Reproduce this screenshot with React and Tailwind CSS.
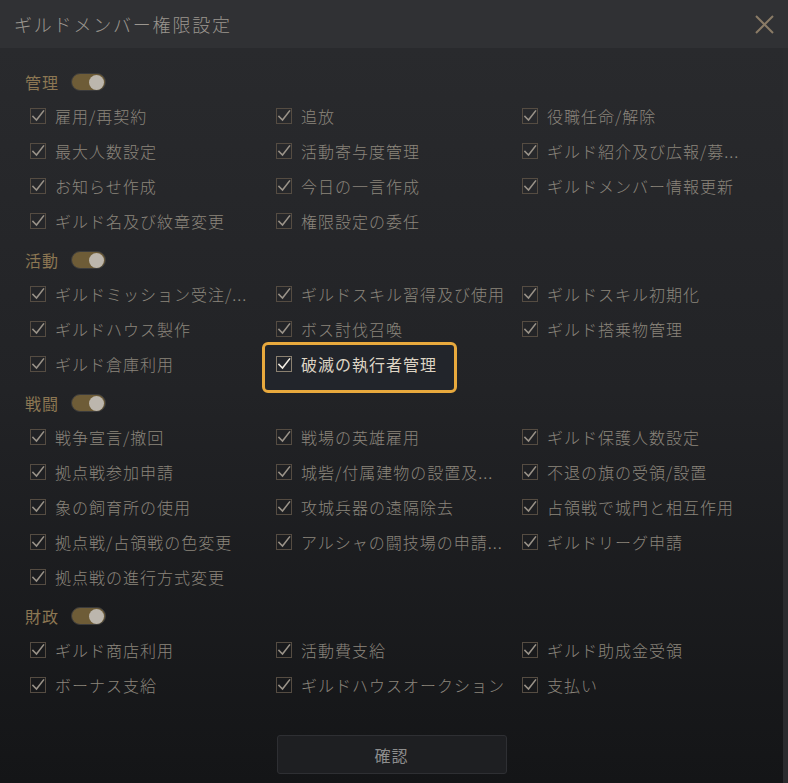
import React from 'react'

const sections = [
    {
        title: '管理',
        items: [
            '雇用/再契約', '追放', '役職任命/解除',
            '最大人数設定', '活動寄与度管理', 'ギルド紹介及び広報/募...',
            'お知らせ作成', '今日の一言作成', 'ギルドメンバー情報更新',
            'ギルド名及び紋章変更', '権限設定の委任',
        ],
    },
    {
        title: '活動',
        items: [
            'ギルドミッション受注/...', 'ギルドスキル習得及び使用', 'ギルドスキル初期化',
            'ギルドハウス製作', 'ボス討伐召喚', 'ギルド搭乗物管理',
            'ギルド倉庫利用', '破滅の執行者管理',
        ],
        highlight: '破滅の執行者管理',
    },
    {
        title: '戦闘',
        items: [
            '戦争宣言/撤回', '戦場の英雄雇用', 'ギルド保護人数設定',
            '拠点戦参加申請', '城砦/付属建物の設置及...', '不退の旗の受領/設置',
            '象の飼育所の使用', '攻城兵器の遠隔除去', '占領戦で城門と相互作用',
            '拠点戦/占領戦の色変更', 'アルシャの闘技場の申請...', 'ギルドリーグ申請',
            '拠点戦の進行方式変更',
        ],
    },
    {
        title: '財政',
        items: [
            'ギルド商店利用', '活動費支給', 'ギルド助成金受領',
            'ボーナス支給', 'ギルドハウスオークション', '支払い',
        ],
    },
]

const Check = ({ bright }) => (
    <span
        className={
            'w-[16px] h-[16px] border flex items-center justify-center shrink-0 ' +
            (bright ? 'border-[#8a8070]' : 'border-[#554c42]')
        }
    >
        <svg width="14" height="14" viewBox="0 0 14 14" fill="none">
            <path
                d="M2 7.5 L5.5 11 L12.5 2"
                stroke={bright ? '#f2ede4' : '#9a9389'}
                strokeWidth="1.6"
                strokeLinecap="square"
            />
        </svg>
    </span>
)

const Toggle = () => (
    <span className="w-[35px] h-[18px] rounded-full bg-[#6e5c37] border border-[#3b3b3c] flex items-center justify-end pr-[1px]">
        <span className="w-[15px] h-[15px] rounded-full bg-[#bcb6ad]" />
    </span>
)

const Item = ({ label, highlight }) => (
    <div className="relative h-[35px] flex items-center">
        {highlight && (
            <span className="absolute left-[-14px] top-[-4px] w-[195px] h-[51px] rounded-[6px] border-[3px] border-[#e8a93d] bg-[#22252b]" />
        )}
        <span className="relative flex items-center gap-[9px]">
            <Check bright={highlight} />
            <span
                className={
                    'text-[16px] tracking-[1px] whitespace-nowrap ' +
                    (highlight ? 'text-[#ddd4c4]' : 'font-light text-[#8b857c]')
                }
            >
                {label}
            </span>
        </span>
    </div>
)

export default function App() {
    return (
        <div
            className="w-[788px] h-[783px] flex flex-col bg-gradient-to-b from-[#2a2b2e] via-[#222326] to-[#141517]"
            style={{ fontFamily: '"Noto Sans CJK JP", "Noto Sans", sans-serif' }}
        >
            <div className="h-[48px] shrink-0 flex items-center justify-between pl-[14px] pr-[13px] bg-[#303134]">
                <span className="text-[18px] font-light tracking-[1.8px] text-[#9b968f]">ギルドメンバー権限設定</span>
                <svg width="22" height="22" viewBox="0 0 22 22" fill="none">
                    <path d="M3 3 L20 20 M20 3 L3 20" stroke="#8a7b66" strokeWidth="2" />
                </svg>
            </div>
            <div className="flex-1 flex flex-col border-r-[5px] border-[#2a2b2e]">
                <div className="flex flex-col gap-[6px] pt-[18px]">
                    {sections.map((s) => (
                        <div key={s.title}>
                            <div className="h-[32px] flex items-center gap-[12px] pl-[25px]">
                                <span className="text-[16px] tracking-[1px] text-[#8c7753]">{s.title}</span>
                                <Toggle />
                            </div>
                            <div className="grid grid-cols-[246px_246px_1fr] pl-[30px]">
                                {s.items.map((it) => (
                                    <Item key={it} label={it} highlight={it === s.highlight} />
                                ))}
                            </div>
                        </div>
                    ))}
                </div>
                <div className="flex justify-center mt-[33px]">
                    <button className="w-[230px] h-[39px] rounded-[3px] bg-[#1e1f22] border border-[#2e2f33] text-[16px] tracking-[1px] text-[#8d8d8d]">
                        確認
                    </button>
                </div>
            </div>
        </div>
    )
}
